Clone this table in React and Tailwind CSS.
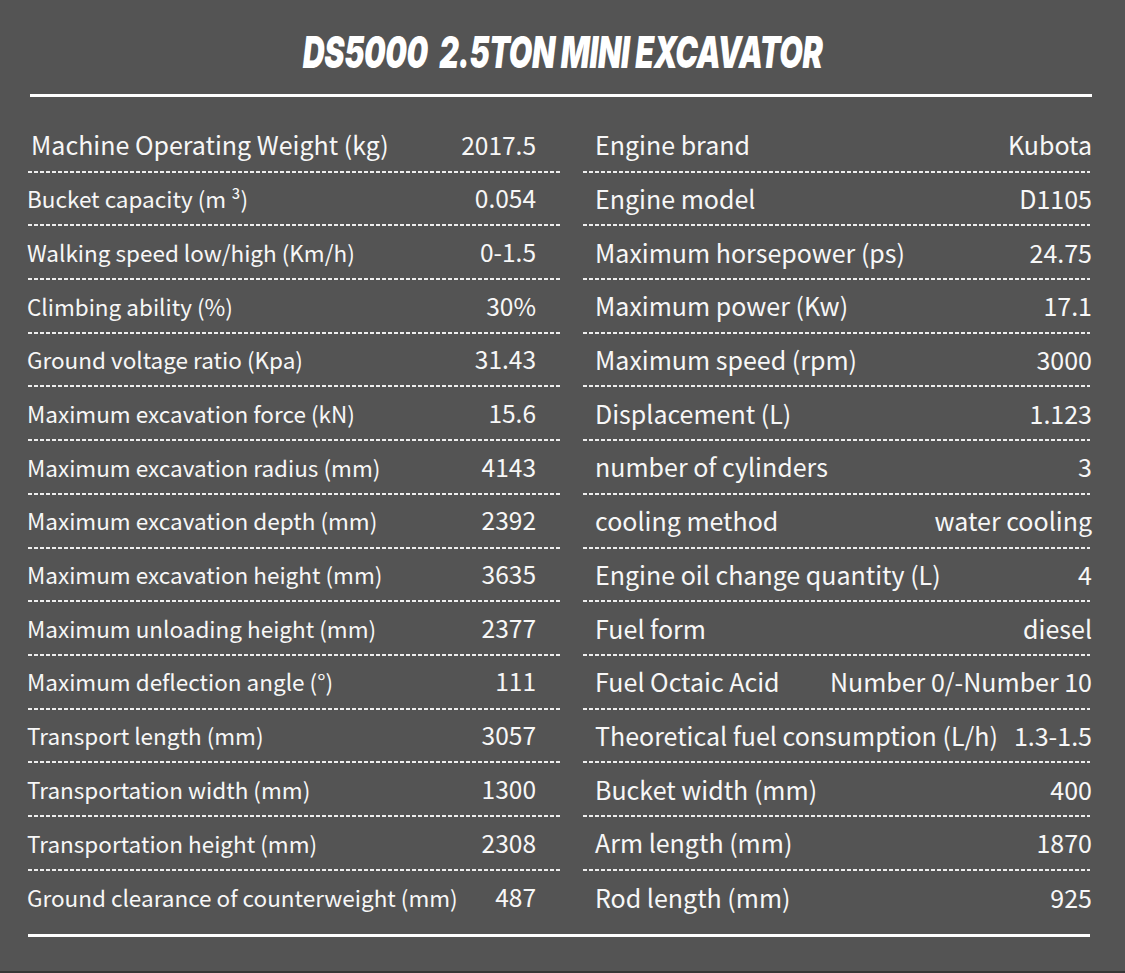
const left = [
  ["Machine Operating Weight (kg)", "2017.5"],
  ["Bucket capacity (m ³)", "0.054"],
  ["Walking speed low/high (Km/h)", "0-1.5"],
  ["Climbing ability (%)", "30%"],
  ["Ground voltage ratio (Kpa)", "31.43"],
  ["Maximum excavation force (kN)", "15.6"],
  ["Maximum excavation radius (mm)", "4143"],
  ["Maximum excavation depth (mm)", "2392"],
  ["Maximum excavation height (mm)", "3635"],
  ["Maximum unloading height (mm)", "2377"],
  ["Maximum deflection angle (°)", "111"],
  ["Transport length (mm)", "3057"],
  ["Transportation width (mm)", "1300"],
  ["Transportation height (mm)", "2308"],
  ["Ground clearance of counterweight (mm)", "487"],
];

const right = [
  ["Engine brand", "Kubota"],
  ["Engine model", "D1105"],
  ["Maximum horsepower (ps)", "24.75"],
  ["Maximum power (Kw)", "17.1"],
  ["Maximum speed (rpm)", "3000"],
  ["Displacement (L)", "1.123"],
  ["number of cylinders", "3"],
  ["cooling method", "water cooling"],
  ["Engine oil change quantity (L)", "4"],
  ["Fuel form", "diesel"],
  ["Fuel Octaic Acid", "Number 0/-Number 10"],
  ["Theoretical fuel consumption (L/h)", "1.3-1.5"],
  ["Bucket width (mm)", "400"],
  ["Arm length (mm)", "1870"],
  ["Rod length (mm)", "925"],
];

const Dash = () => (
  <div className="h-[2px] w-full bg-[repeating-linear-gradient(to_right,rgba(255,255,255,0.9)_0_4px,transparent_4px_6px)]" />
);

const Row = ({ label, value, last, labelCls, valueCls }) => (
  <div className="flex h-[53.7px] flex-col">
    <div className="flex flex-1 items-center justify-between">
      <span className={labelCls}>{label}</span>
      <span className={valueCls}>{value}</span>
    </div>
    {!last && <Dash />}
  </div>
);

export default function App() {
  return (
    <div
      className="h-[973px] w-[1125px] overflow-hidden border-b-2 border-[#363636] bg-[#545454] text-[#f7f7f7]"
      style={{ fontFamily: '"Noto Sans CJK SC", "Noto Sans", sans-serif' }}
    >
      {/* Title */}
      <div className="flex h-[94px] items-center justify-center pt-[10px]">
        <h1
          className="origin-center scale-x-[0.69] whitespace-pre text-[44px] leading-none font-black italic tracking-[-0.5px] text-white"
          style={{ fontFamily: "Inter, Roboto, sans-serif" }}
        >
          DS5000  2.5TON MINI EXCAVATOR
        </h1>
      </div>
      <div className="ml-[30px] mr-[33px] h-[3px] bg-white" />

      {/* Spec table */}
      <div className="mt-[22px] flex">
        <div className="ml-[28px] w-[532px]">
          {left.map(([l, v], i) => (
            <Row
              key={l}
              label={l}
              value={v}
              last={i === left.length - 1}
              labelCls={
                i === 0
                  ? "pl-[3px] text-[25px] leading-none"
                  : "-ml-[1px] text-[22.5px] leading-none"
              }
              valueCls="pr-[24px] text-[24.5px] leading-none"
            />
          ))}
        </div>
        <div className="ml-[23px] w-[507px]">
          {right.map(([l, v], i) => (
            <Row
              key={l}
              label={l}
              value={v}
              last={i === right.length - 1}
              labelCls="pl-[12px] text-[25px] leading-none"
              valueCls="-mr-[2px] text-[25px] leading-none"
            />
          ))}
        </div>
      </div>

      <div className="ml-[28px] mr-[35px] mt-[10px] h-[3px] bg-white" />
    </div>
  );
}
